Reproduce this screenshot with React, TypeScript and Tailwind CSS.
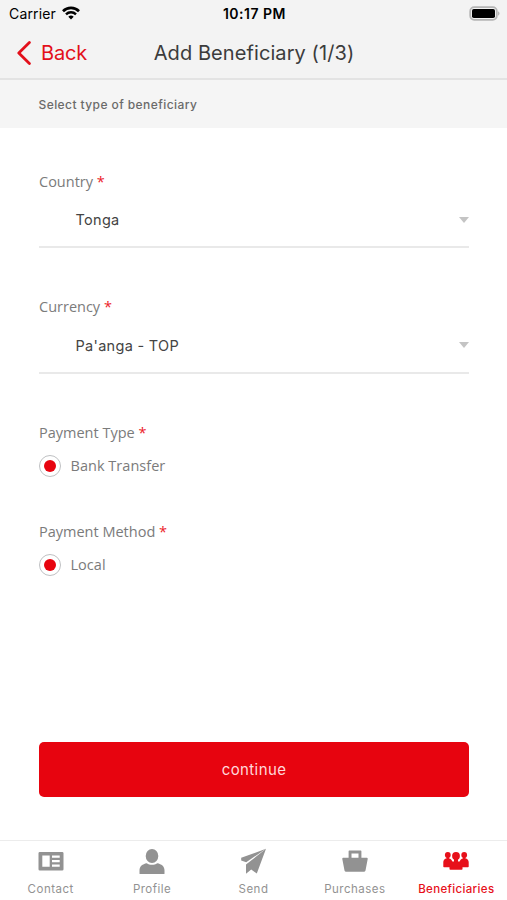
import type { ReactNode } from "react";
import { useState } from "react";

const sans = "font-['Inter',sans-serif]";
const label = "font-['Open_Sans','Noto_Sans',sans-serif]";

function StatusBar() {
  return (
    <div className={`${sans} grid h-7 grid-cols-3 items-center pr-[7px] pl-[9px] text-black`}>
      <div className="flex items-center gap-[6px]">
        <span className="text-[14px] leading-none tracking-[0.15px]">Carrier</span>
        <svg viewBox="0 0 18 14" className="mb-0.5 h-[14px] w-[18px]" fill="none" stroke="currentColor">
          <path d="M1 5.2a11.4 11.4 0 0 1 16 0" strokeWidth="2.7" />
          <path d="M4 8.3a7.1 7.1 0 0 1 10 0" strokeWidth="2.4" />
          <path d="M6.3 10.7 9 13.4l2.7-2.7a3.9 3.9 0 0 0-5.4 0z" fill="currentColor" stroke="none" />
        </svg>
      </div>
      <span className="text-center text-[14px] leading-none font-semibold tracking-[0.5px]">10:17 PM</span>
      <svg viewBox="0 0 31 15" className="mb-0.5 h-[15px] w-[31px] justify-self-end">
        <rect x="1.2" y="1.2" width="26.6" height="12.6" rx="4" fill="none" stroke="#b5b5b5" strokeWidth="1.8" />
        <rect x="3" y="3" width="23" height="9" rx="1.8" fill="#000" />
        <path d="M29.2 5.3v4.4c1.7-.8 1.7-3.6 0-4.4z" fill="#a9a9a9" />
      </svg>
    </div>
  );
}

function NavHeader() {
  return (
    <header className={`${sans} relative flex h-[50px] items-center justify-center`}>
      <button className="absolute left-[17px] flex items-center gap-[10px] text-[#e3101b]">
        <svg viewBox="0 0 14 24" className="h-6 w-[14px]" fill="none" stroke="currentColor" strokeWidth="2.8" strokeLinecap="round" strokeLinejoin="round">
          <path d="M12.4 1.6 1.8 12l10.6 10.4" />
        </svg>
        <span className="text-[20px] leading-6 tracking-[-0.2px]">Back</span>
      </button>
      <h1 className="pl-px text-[20px] leading-6 tracking-[0.08px] text-[#3c3c3c]">Add Beneficiary (1/3)</h1>
    </header>
  );
}

function FieldLabel({ children }: { children: ReactNode }) {
  return (
    <div className={`${label} text-[14.5px] leading-5 text-[#7b7b7b]`}>
      {children} <span className="text-[#ec2029]">*</span>
    </div>
  );
}

function SelectField({ name, value }: { name: string; value: string }) {
  return (
    <div className="h-[125.3px]">
      <FieldLabel>{name}</FieldLabel>
      <button className={`${sans} flex h-[56.3px] w-full items-center justify-between border-b-2 border-[#e9e9e9] pt-[2px] pl-[36.5px] text-left text-[14.5px] text-[#444]`}>
        <span className="tracking-[0.3px]">{value}</span>
        <svg viewBox="0 0 10 6" className="h-[6px] w-[10px]">
          <path d="M0 0h10L5 6z" fill="#c4c4c4" />
        </svg>
      </button>
    </div>
  );
}

function RadioField({ name, option }: { name: string; option: string }) {
  return (
    <div className="h-[99.3px]">
      <FieldLabel>{name}</FieldLabel>
      <div className="mt-[12px] flex items-center gap-[9.5px]">
        <span className="grid size-[22px] place-items-center rounded-full border border-[#bfc1c3]">
          <span className="size-[12px] rounded-full bg-[#e7040f]" />
        </span>
        <span className={`${label} text-[14.5px] leading-5 tracking-[0.03px] text-[#7b7b7b]`}>{option}</span>
      </div>
    </div>
  );
}

const tabs = [
  {
    name: "Contact",
    icon: (
      <path fillRule="evenodd" d="M1.8 4h22.4q1.3 0 1.3 1.3v16q0 1.3-1.3 1.3H1.8Q.5 22.6.5 21.3v-16Q.5 4 1.8 4zM4.3 7.6v11.2h7.4V7.6zM14 7.6v2.2h7.7V7.6zM14 12.1v2.2h7.7v-2.2zM14 16.6v2.2h7.7v-2.2z" />
    ),
  },
  {
    name: "Profile",
    icon: (
      <>
        <ellipse cx="13" cy="8" rx="6.3" ry="7" />
        <path d="M.5 25.5v-3c0-4.2 3-6.5 7.3-7.3 3 2 7.4 2 10.4 0 4.3.8 7.3 3.1 7.3 7.3v3q0 .5-.5.5H1q-.5 0-.5-.5z" />
      </>
    ),
  },
  {
    name: "Send",
    icon: (
      <>
        <path d="M26 .8 1.2 9.800v2.600l5 1.800z" />
        <path d="M26 .8 6 16.500v9.300l5.200-4.400 5.600 4.200z" />
      </>
    ),
  },
  {
    name: "Purchases",
    icon: (
      <path fillRule="evenodd" d="M7.3 2.5h11.4q.7 0 .7.7v6.6h5.3q1.2 0 1 1.2l-2.200 11.500q-.3 1.300-1.700 1.300H4.200q-1.400 0-1.700-1.300L.3 11q-.2-1.200 1-1.200h5.300V3.200q0-.7.7-.7zM9.500 5.500v4.300h7V5.500z" />
    ),
  },
  {
    name: "Beneficiaries",
    icon: (
      <>
        <circle cx="4.8" cy="7" r="2.9" />
        <circle cx="21.2" cy="7" r="2.9" />
        <circle cx="13" cy="7.9" r="3.9" />
        <path d="M3.500 8.500h2.600v3.500H3.500zM19.900 8.500h2.600v3.500h-2.600zM11 10h4v5h-4z" />
        <path d="M.3 18.500v-4.300c0-2 1-3.200 2.700-3.800h3.500c1.500.5 2.500 1.700 2.900 3.200h7.200c.4-1.500 1.400-2.700 2.900-3.200H23c1.700.6 2.700 1.800 2.700 3.800v4.300q0 .7-.7.7h-5.500v1.800q0 .8-.8.800H7.300q-.8 0-.8-.8v-1.800H1q-.7 0-.7-.7z" />
      </>
    ),
  },
];

function TabBar() {
  const [active, setActive] = useState("Beneficiaries");
  return (
    <nav className={`${sans} grid h-[60px] grid-cols-5 border-t border-[#ececec] bg-white`}>
      {tabs.map((tab) => (
        <button
          key={tab.name}
          onClick={() => setActive(tab.name)}
          className={`flex flex-col items-center pt-[7px] ${tab.name === active ? "text-[#e7101a]" : "text-[#929292]"}`}
        >
          <svg viewBox="0 0 26 26" className="size-[26px]" fill="currentColor">
            {tab.icon}
          </svg>
          <span className={`mt-[7px] text-[11.5px] leading-4 ${tab.name === active ? "font-medium tracking-[0.35px]" : "tracking-[0.5px]"}`}>
            {tab.name}
          </span>
        </button>
      ))}
    </nav>
  );
}

export default function App() {
  return (
    <div className="flex h-[900px] w-full flex-col overflow-hidden bg-white">
      <div className="border-b-2 border-[#e3e3e3] bg-[#f3f3f3]">
        <StatusBar />
        <NavHeader />
      </div>
      <div className={`${sans} flex h-12 items-center bg-[#f5f5f5] pt-px pl-[38.5px] text-[12px] font-medium tracking-[0.42px] text-[#6a6a6a]`}>
        Select type of beneficiary
      </div>

      <main className="flex flex-1 flex-col pt-[44px] pr-[38px] pl-[39px]">
        <SelectField name="Country" value="Tonga" />
        <SelectField name="Currency" value="Pa'anga - TOP" />
        <RadioField name="Payment Type" option="Bank Transfer" />
        <RadioField name="Payment Method" option="Local" />
        <button className={`${sans} mt-auto mb-[43px] h-[55px] rounded-[5px] bg-[#e7040f] pt-0.5 text-[15px] tracking-[0.4px] text-[#ffd9db]`}>
          continue
        </button>
      </main>

      <TabBar />
    </div>
  );
}
